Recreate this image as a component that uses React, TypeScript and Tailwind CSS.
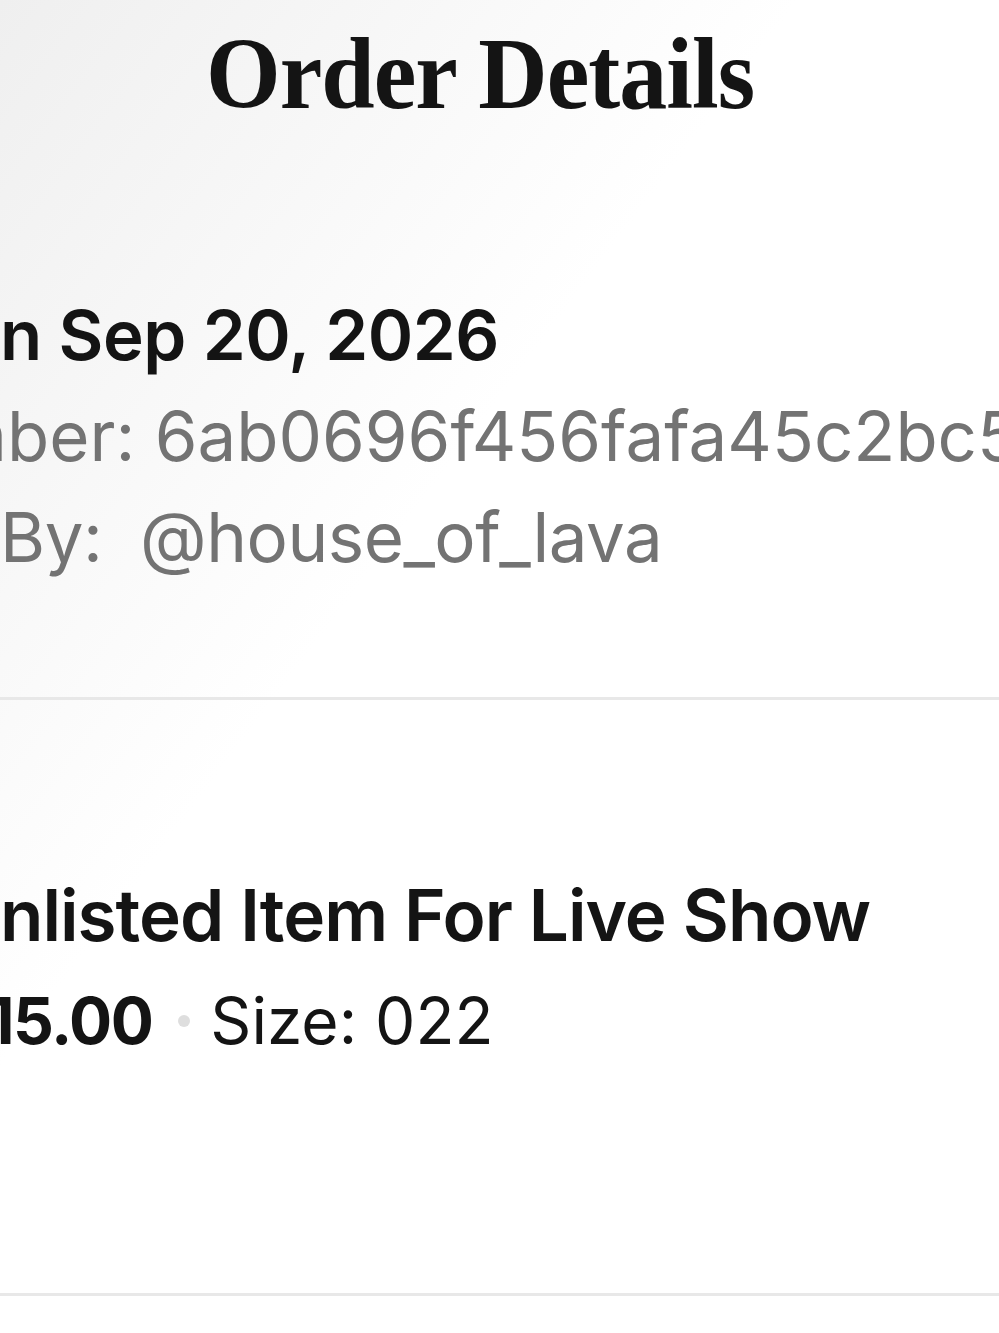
import React from "react";

// Clipped line: the hidden prefix sits in a zero-width box that overflows to the left,
// so the visible text starts exactly at the line's padding.
function Clipped({ hidden, children, className }: { hidden: string; children: React.ReactNode; className: string }) {
  return (
    <div className={`flex items-baseline whitespace-nowrap ${className}`}>
      <span className="flex w-0 justify-end">
        <span>{hidden}</span>
      </span>
      {children}
    </div>
  );
}

const sans = "font-['Inter','Liberation_Sans',sans-serif]";

export default function App() {
  return (
    <div className="min-h-[1333px] w-[999px] overflow-hidden bg-linear-to-br from-[#efefef] via-white via-40% to-white text-[#141414]">
      {/* header */}
      <header className="pt-[24px] pl-[206px]">
        <h1 className="origin-left scale-x-[0.95] font-['Liberation_Serif',serif] text-[101px] font-bold leading-[101px] tracking-[-1px]">
          Order Details
        </h1>
      </header>

      {/* order meta */}
      <section className={`mt-[160px] ${sans} text-[69px] leading-[101px]`}>
        <Clipped hidden="Placed o" className="pl-[0px] font-semibold tracking-[-0.5px]">
          <span>n Sep 20, 2026</span>
        </Clipped>
        <Clipped hidden="Order Num" className="pl-[7px] text-[#737373]">
          <span>ber: 6ab0696f456fafa45c2bc5a1</span>
        </Clipped>
        <Clipped hidden={"Sold\u00a0"} className="pl-[0px] text-[#737373] tracking-[-0.5px]">
          <span>By:&nbsp; @house_of_lava</span>
        </Clipped>
      </section>

      <div className="mt-[109px] h-[3px] bg-[#e8e8e8]" />

      {/* item */}
      <section className={`mt-[163px] ${sans}`}>
        <Clipped hidden="U" className="pl-[0px] text-[71px] font-semibold leading-[105px] tracking-[-1px]">
          <span>nlisted Item For Live Show</span>
        </Clipped>
        <Clipped hidden="$" className="-ml-[13px] text-[64px] leading-[105px]">
          <span className="font-bold tracking-[-1.5px]">15.00</span>
          <span className="ml-[26px] mr-[20px] inline-block h-[12px] w-[12px] self-center rounded-full bg-[#dedede]" />
          <span>Size: 022</span>
        </Clipped>
      </section>

      <div className="mt-[220px] h-[3px] bg-[#e8e8e8]" />
    </div>
  );
}
